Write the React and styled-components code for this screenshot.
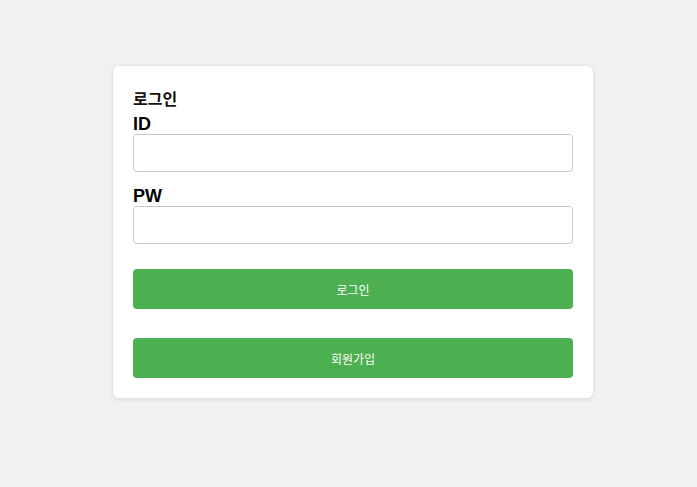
import React from 'react';
import styled, { createGlobalStyle } from 'styled-components';

const GlobalStyle = createGlobalStyle`
    html, body {
        margin: 0;
        padding: 0;
        background-color: #f1f1f1;
        font-family: "Liberation Sans", "Noto Sans CJK KR", sans-serif;
    }
    * {
        box-sizing: border-box;
    }
`;

const Page = styled.div`
    min-height: 487px;
    padding: 66px 0 0 113px;
`;

const Card = styled.form`
    width: 480px;
    background-color: #fff;
    padding: 20px;
    border-radius: 6px;
    box-shadow: 0 1px 5px rgba(0, 0, 0, 0.12);
    display: flex;
    flex-direction: column;
`;

const Title = styled.h2`
    margin: 0;
    height: 26px;
    padding-top: 2px;
    line-height: 24px;
    font-size: 16px;
    font-weight: bold;
    color: #111;
`;

const Label = styled.label`
    display: block;
    height: 22px;
    padding-top: 3px;
    line-height: 19px;
    font-size: 18px;
    font-weight: bold;
    color: #000;
`;

const Input = styled.input`
    width: 100%;
    height: 38px;
    padding: 0 10px;
    margin: 0 0 ${(p) => p.$gap}px;
    border: 1px solid #c8c8c8;
    border-radius: 4px;
    font-size: 14px;
    font-family: inherit;
    outline: none;
`;

const Button = styled.button`
    width: 100%;
    height: 40px;
    margin-bottom: ${(p) => p.$gap}px;
    border: none;
    border-radius: 4px;
    background-color: #4caf50;
    color: #fff;
    font-size: 12px;
    font-family: "Noto Sans CJK KR", "Liberation Sans", sans-serif;
    cursor: pointer;
`;

const App = () => {
    return (
        <Page>
            <GlobalStyle />
            <Card onSubmit={(e) => e.preventDefault()}>
                <Title>로그인</Title>
                <Label htmlFor="id">ID</Label>
                <Input id="id" name="id" $gap={12} />
                <Label htmlFor="pw">PW</Label>
                <Input id="pw" name="pw" type="password" $gap={25} />
                <Button type="submit" $gap={29}>로그인</Button>
                <Button type="button" $gap={0}>회원가입</Button>
            </Card>
        </Page>
    );
};

export default App;
